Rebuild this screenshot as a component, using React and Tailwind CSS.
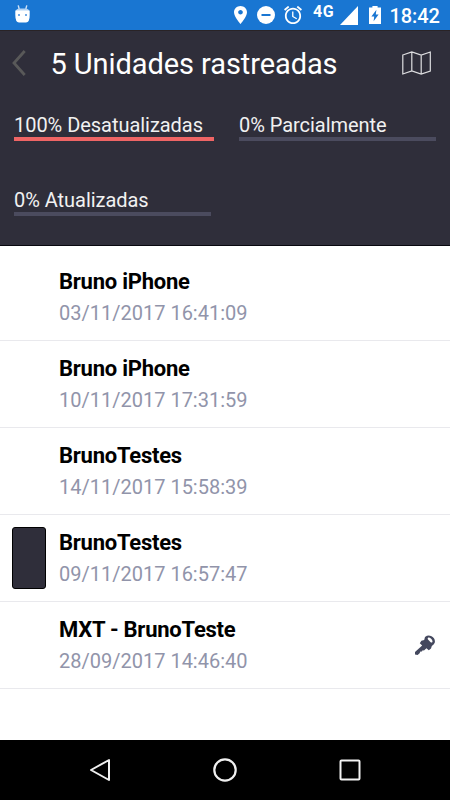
import React from "react";

const summary = [
  { label: "100% Desatualizadas", color: "bg-[#ef6565]", width: "w-[200px]" },
  { label: "0% Parcialmente", color: "bg-[#4b4b5e]", width: "w-[197px]" },
  { label: "0% Atualizadas", color: "bg-[#4b4b5e]", width: "w-[197px]" },
];

const units = [
  { name: "Bruno iPhone", date: "03/11/2017 16:41:09" },
  { name: "Bruno iPhone", date: "10/11/2017 17:31:59" },
  { name: "BrunoTestes", date: "14/11/2017 15:58:39" },
  { name: "BrunoTestes", date: "09/11/2017 16:57:47", thumb: true },
  { name: "MXT - BrunoTeste", date: "28/09/2017 14:46:40", ignition: true },
];

const KeyIcon = () => (
  <svg className="w-[22px] h-[22px] mt-[2px]" viewBox="0 0 22 22">
    <path
      fill="#44485e"
      fillRule="evenodd"
      d="M11 2 Q14 -0.2 17 1 Q21.6 3.4 20.8 7.6 Q20.4 9.6 17.8 11 L17 13.4 L14.8 15.2 L12.4 13.2 L10 15.4 L8.6 15.2 L8 16.6 L6.4 16.6 L5.6 18.2 L3.6 20 L1 19.6 L1 17 L8.2 10.4 L5.8 8.2 L7.4 5.8 L10.2 5 Z M14.4 2.6 Q13.2 3.2 14 4.4 L16.6 7.2 Q17.8 8 18.4 7 Q18.8 5.8 17.4 4 Q15.8 2 14.4 2.6 Z"
    />
  </svg>
);

const StatusBar = () => (
  <div className="flex items-center h-[30px] pl-[15px] bg-[#1976d2] text-white">
    {/* Android head */}
    <svg className="w-[15px] h-[18px] -mt-[3px]" viewBox="0 0 15 18">
      <path d="M3.2 0.4 L4.2 4 M11.8 0.4 L10.8 4" stroke="#cfe2f7" strokeWidth="1.4" />
      <path d="M0.8 6 Q1.2 3.6 4 3.4 H11 Q13.8 3.6 14.2 6 Z" fill="#b3d3f3" />
      <path d="M0.3 5.6 H14.7 V10 Q14.7 17.4 11 17.4 H4 Q0.3 17.4 0.3 10 Z" fill="#fff" />
      <path d="M3 9 H5 V11 H3 Z M10 9 H12 V11 H10 Z" fill="#73aae6" />
    </svg>

    {/* Location pin */}
    <svg className="w-[13px] h-[18px] ml-[204px]" viewBox="5 2 14 20" preserveAspectRatio="none">
      <path
        fill="#fff"
        d="M12 2C8.13 2 5 5.13 5 9c0 5.25 7 13 7 13s7-7.75 7-13c0-3.87-3.13-7-7-7zm0 9.5c-1.38 0-2.5-1.12-2.5-2.5s1.12-2.5 2.5-2.5 2.5 1.12 2.5 2.5-1.12 2.5-2.5 2.5z"
      />
    </svg>

    {/* Do not disturb */}
    <svg className="w-[18px] h-[18px] ml-[10px]" viewBox="0 0 18 18">
      <circle cx="9" cy="9" r="9" fill="#fff" />
      <path d="M4.5 9 H13.5" stroke="#1976d2" strokeWidth="2" />
    </svg>

    {/* Alarm */}
    <svg className="w-[18px] h-[18px] ml-[9px]" viewBox="2 2 20 20">
      <path
        fill="#fff"
        d="M22 5.72l-4.6-3.86-1.29 1.53 4.6 3.86L22 5.72zM7.88 3.39L6.6 1.86 2 5.71l1.29 1.53 4.59-3.85zM12.5 8H11v6l4.75 2.85.75-1.23-4-2.37V8zM12 4c-4.97 0-9 4.03-9 9s4.02 9 9 9c4.97 0 9-4.03 9-9s-4.03-9-9-9zm0 16c-3.87 0-7-3.13-7-7s3.13-7 7-7 7 3.13 7 7-3.13 7-7 7z"
      />
    </svg>

    <span className="w-[22px] ml-[11px] -mt-[7px] text-[16px] leading-4 font-bold tracking-[0.6px]">4G</span>

    {/* Signal */}
    <svg className="w-[18px] h-[19px] ml-[5px] mt-px" viewBox="0 0 18 19">
      <path d="M0 19 L18 0 V19 Z" fill="#fff" />
    </svg>

    {/* Battery charging */}
    <svg className="w-3 h-[18px] ml-[11px]" viewBox="0 0 12 18">
      <path d="M3.4 0 H8.6 V1.4 H12 V18 H0 V1.4 H3.4 Z" fill="#fff" />
      <path d="M7.4 3.8 L2.4 10.6 H5.2 L4.6 15.2 L9.6 8.6 H6.8 Z" fill="#1976d2" />
    </svg>

    <span className="ml-[8.5px] text-[20px] leading-5 font-medium mt-px tracking-[-0.1px]">18:42</span>
  </div>
);

const Header = () => (
  <div className="h-[216px] bg-[#2f2e3a] text-white border-t border-b border-t-[#292326] border-b-[#08080f]">
    <div className="flex items-center h-[66px] pl-3 pr-[19px]">
      <svg className="w-[14px] h-[26px] -mt-[2px]" viewBox="0 0 14 26">
        <path d="M12.7 1 L2 13 L12.7 25" fill="none" stroke="#595959" strokeWidth="2.8" />
      </svg>
      <h1 className="flex-1 ml-[24.5px] text-[29px] leading-8 tracking-[-0.08px] whitespace-nowrap">5 Unidades rastreadas</h1>
      <svg className="w-[29px] h-[24px] -mt-[2px]" viewBox="0 0 29 24" fill="none" stroke="#dedee0" strokeWidth="1.2">
        <path d="M0.8 4 L9.8 1 L19.2 4 L28.3 1 V20 L19.2 23 L9.8 20 L0.8 23 Z M9.8 1 V20 M19.2 4 V23" />
      </svg>
    </div>

    <div className="grid grid-cols-[225px_197px] pl-[14px] pt-[15px] gap-y-[46px]">
      {summary.map((item) => (
        <div key={item.label} className={item.width}>
          <p className="h-[25px] text-[20px] leading-[27px] tracking-[-0.04px] whitespace-nowrap text-[#f1f1f1]">{item.label}</p>
          <div className={`h-1 ${item.color}`} />
        </div>
      ))}
    </div>
  </div>
);

const UnitRow = ({ unit }) => (
  <li className="flex items-center h-[87px] pl-3 pr-[14px] border-b border-[#e9e9ed]">
    <div className="w-[47px]">
      {unit.thumb && <div className="w-[34px] h-[62px] rounded-[3px] bg-[#2f2e3a] border border-black" />}
    </div>
    <div className="flex-1 pt-px">
      <p className="text-[22px] leading-[30px] font-bold tracking-[-0.25px] text-black">{unit.name}</p>
      <p className="text-[20px] leading-[32px] text-[#9194aa]">{unit.date}</p>
    </div>
    {unit.ignition && <KeyIcon />}
  </li>
);

const NavBar = () => (
  <div className="flex items-center justify-between h-[60px] pl-[87px] pr-[88px] bg-black">
    <svg className="w-6 h-6" viewBox="0 0 24 24" fill="none" stroke="#f0f0f0" strokeWidth="2" strokeLinejoin="round">
      <path d="M22 2 V22 L4 12 Z" />
    </svg>
    <svg className="w-6 h-6" viewBox="0 0 24 24" fill="none" stroke="#f0f0f0" strokeWidth="2.2">
      <circle cx="12" cy="12" r="10.7" />
    </svg>
    <svg className="w-6 h-6" viewBox="0 0 24 24" fill="none" stroke="#f0f0f0" strokeWidth="2">
      <rect x="2.5" y="2.5" width="19" height="19" rx="1" />
    </svg>
  </div>
);

const App = () => {
  return (
    <div className="flex flex-col w-[450px] h-[800px] overflow-hidden bg-white font-[Roboto,sans-serif]">
      <StatusBar />
      <Header />
      <ul className="flex-1 pt-2">
        {units.map((unit, index) => (
          <UnitRow key={index} unit={unit} />
        ))}
      </ul>
      <NavBar />
    </div>
  );
};

export default App;
